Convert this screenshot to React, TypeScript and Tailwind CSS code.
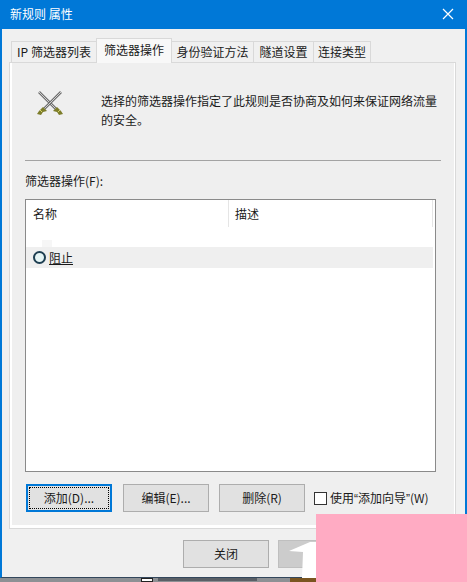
const font = { fontFamily: '"Noto Sans CJK SC", "Liberation Sans", sans-serif' };

function Tab({ label, w }: { label: string; w: string }) {
  return (
    <div className={`${w} h-[21px] flex items-center justify-center bg-[#f0f0f0] border border-b-0 border-[#d9d9d9] -ml-px text-[12px] leading-none text-[#1a1a1a] whitespace-pre`}>
      {label}
    </div>
  );
}

function Btn({ label, w = "w-[86px]", className = "" }: { label: string; w?: string; className?: string }) {
  return (
    <div className={`${w} h-[28px] flex items-center justify-center bg-[#e1e1e1] border border-[#adadad] text-[12px] leading-none text-[#1a1a1a] ${className}`}>
      {label}
    </div>
  );
}

function Swords() {
  return (
    <svg width="28" height="26" viewBox="0 0 28 26" className="block">
      <path d="M3 2 L21 20" stroke="#6f6f6f" strokeWidth="2.6" />
      <path d="M3 2 L21 20" stroke="#e8e8e8" strokeWidth="0.8" />
      <path d="M25 2 L7 20" stroke="#6f6f6f" strokeWidth="2.6" />
      <path d="M25 2 L7 20" stroke="#e8e8e8" strokeWidth="0.8" />
      <path d="M7 17 L11 21 L7 22 L5 25 L1 24 L3 21 Z" fill="#7d7d2a" />
      <path d="M21 17 L17 21 L21 22 L23 25 L27 24 L25 21 Z" fill="#7d7d2a" />
      <path d="M4 20 L6 22" stroke="#d8d86a" strokeWidth="1" />
      <path d="M24 20 L22 22" stroke="#d8d86a" strokeWidth="1" />
    </svg>
  );
}

export default function App() {
  return (
    <div className="relative w-[467px] h-[582px] overflow-hidden flex flex-col bg-[#8d9094]" style={font}>
      <div className="h-[578px] flex flex-col border-x-2 border-b border-[#0078d7] border-b-[#33475c] bg-[#f0f0f0] shrink-0">
        <div className="h-[29px] -mx-[2px] bg-[#0078d7] flex items-center justify-between pl-[10px] pr-[13px] pb-[2px] shrink-0">
          <span className="text-[12px] leading-none text-white whitespace-pre">新规则 属性</span>
          <svg width="12" height="12" viewBox="0 0 12 12">
            <path d="M1 1 L11 11 M11 1 L1 11" stroke="#ffffff" strokeWidth="1.2" />
          </svg>
        </div>

        <div className="flex items-end h-[33px] pl-[10px] shrink-0">
          <Tab label="IP 筛选器列表" w="w-[86px]" />
          <div className="w-[76px] h-[25px] -ml-px flex items-start pt-[4px] justify-center bg-[#f8f8f8] border border-b-0 border-[#d9d9d9] text-[12px] leading-[14px] text-[#1a1a1a] -mb-px relative">
            筛选器操作
          </div>
          <Tab label="身份验证方法" w="w-[83px]" />
          <Tab label="隧道设置" w="w-[61px]" />
          <Tab label="连接类型" w="w-[58px]" />
        </div>

        <div className="ml-[7px] w-[447px] h-[467px] border border-[#d9d9d9] shrink-0">
          <div className="h-full border-l-[2px] border-r border-b-[3px] border-white flex flex-col pl-[13px] bg-[#efefef]">
            <div className="flex h-[97px] shrink-0">
              <div className="pl-[11px] pt-[27px] w-[76px] shrink-0">
                <Swords />
              </div>
              <p className="pt-[28px] w-[340px] text-[12px] leading-[19px] text-[#1a1a1a]">
                选择的筛选器操作指定了此规则是否协商及如何来保证网络流量的安全。
              </p>
            </div>
            <div className="h-px w-[416px] bg-[#a3a3a3] shrink-0" />
            <div className="h-[38px] pt-[13px] text-[12px] leading-[14px] text-[#1a1a1a] shrink-0">筛选器操作(F):</div>

            <div className="w-[411px] h-[273px] bg-white border border-[#8a8a8a] flex flex-col shrink-0">
              <div className="h-[27px] flex text-[12px] leading-none text-[#1a1a1a] shrink-0">
                <div className="w-[203px] pl-[7px] pt-[8px] border-r border-[#e5e5e5]">名称</div>
                <div className="w-[204px] pl-[6px] pt-[8px] border-r border-[#e5e5e5]">描述</div>
              </div>
              <div className="h-[20px] shrink-0 flex items-end pl-[16px]">
                <div className="w-[10px] h-[7px] bg-[#f6f6f6]" />
              </div>
              <div className="w-[407px] h-[21px] bg-[#efefef] flex items-center pl-[7px] gap-[3px] shrink-0">
                <span className="w-[13px] h-[13px] rounded-full border-2 border-[#1e3f52] bg-[#e6f5f5] shrink-0" />
                <span className="text-[12px] leading-[14px] text-[#1a1a1a] underline">阻止</span>
              </div>
            </div>

            <div className="flex items-center mt-[12px] shrink-0">
              <div className="ml-px w-[86px] h-[28px] flex items-center justify-center bg-[#e1e1e1] border-2 border-[#0078d7] text-[12px] leading-none text-[#1a1a1a] shrink-0">
                <div className="w-[80px] h-[22px] flex items-center justify-center border border-dotted border-black">添加(D)...</div>
              </div>
              <Btn label="编辑(E)..." className="ml-[11px] shrink-0" />
              <Btn label="删除(R)" className="ml-[10px] shrink-0" />
              <span className="ml-[9px] w-[13px] h-[13px] border border-[#333333] bg-white shrink-0" />
              <span className="ml-[3px] text-[12px] leading-none text-[#1a1a1a] whitespace-nowrap">
                使用<span className="font-['Liberation_Sans']">“</span>添加向导<span className="font-['Liberation_Sans']">”</span>(W)
              </span>
            </div>
          </div>
        </div>

        <div className="flex items-start pt-[11px] pl-[181px] gap-[9px]">
          <Btn label="关闭" />
          <div className="w-[86px] h-[28px] bg-[#cccccc] border border-[#bfbfbf]" />
        </div>
      </div>

      <div className="h-[4px] flex items-start pl-[141px] shrink-0">
        <span className="w-[12px] h-[4px] border border-[#222222] bg-white" />
        <span className="ml-[5px] w-[99px] h-[3px] bg-[#5a5f66]" />
        <span className="ml-[33px] w-[26px] h-[4px] bg-[#7a5520]" />
      </div>

      <svg className="absolute left-[288px] top-[540px]" width="30" height="40" viewBox="0 0 30 40">
        <path d="M1 11 L22 2 L28 2 L28 38 L14 38 L15 12 Z" fill="#ffffff" />
      </svg>
      <div className="absolute left-[316px] top-[514px] w-[151px] h-[68px] bg-[#ffabc3]" />
    </div>
  );
}
